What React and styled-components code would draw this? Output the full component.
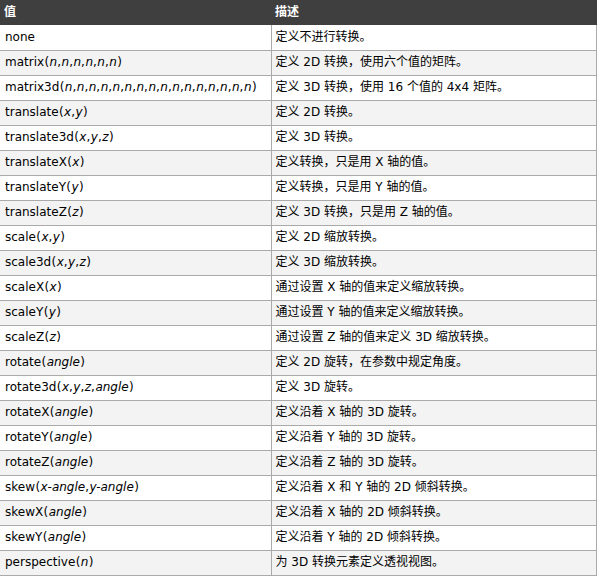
import React from 'react';
import styled, { createGlobalStyle } from 'styled-components';

const GlobalStyle = createGlobalStyle`
  html, body {
    margin: 0;
    padding: 0;
    background: #ffffff;
  }
  body {
    font-family: "DejaVu Sans", Verdana, "Noto Sans CJK SC", sans-serif;
    font-size: 12px;
  }
`;

const rows = [
  ['none', null, '定义不进行转换。'],
  ['matrix', ['n', 'n', 'n', 'n', 'n', 'n'], '定义 2D 转换，使用六个值的矩阵。'],
  ['matrix3d', Array(16).fill('n'), '定义 3D 转换，使用 16 个值的 4x4 矩阵。'],
  ['translate', ['x', 'y'], '定义 2D 转换。'],
  ['translate3d', ['x', 'y', 'z'], '定义 3D 转换。'],
  ['translateX', ['x'], '定义转换，只是用 X 轴的值。'],
  ['translateY', ['y'], '定义转换，只是用 Y 轴的值。'],
  ['translateZ', ['z'], '定义 3D 转换，只是用 Z 轴的值。'],
  ['scale', ['x', 'y'], '定义 2D 缩放转换。'],
  ['scale3d', ['x', 'y', 'z'], '定义 3D 缩放转换。'],
  ['scaleX', ['x'], '通过设置 X 轴的值来定义缩放转换。'],
  ['scaleY', ['y'], '通过设置 Y 轴的值来定义缩放转换。'],
  ['scaleZ', ['z'], '通过设置 Z 轴的值来定义 3D 缩放转换。'],
  ['rotate', ['angle'], '定义 2D 旋转，在参数中规定角度。'],
  ['rotate3d', ['x', 'y', 'z', 'angle'], '定义 3D 旋转。'],
  ['rotateX', ['angle'], '定义沿着 X 轴的 3D 旋转。'],
  ['rotateY', ['angle'], '定义沿着 Y 轴的 3D 旋转。'],
  ['rotateZ', ['angle'], '定义沿着 Z 轴的 3D 旋转。'],
  ['skew', ['x-angle', 'y-angle'], '定义沿着 X 和 Y 轴的 2D 倾斜转换。'],
  ['skewX', ['angle'], '定义沿着 X 轴的 2D 倾斜转换。'],
  ['skewY', ['angle'], '定义沿着 Y 轴的 2D 倾斜转换。'],
  ['perspective', ['n'], '为 3D 转换元素定义透视视图。'],
];

const Value = ({ name, args }) => {
  if (!args) return <>{name}</>;
  return (
    <>
      {name}
      <Paren>(</Paren>
      {args.map((a, i) => (
        <React.Fragment key={i}>
          {i > 0 && <Comma>,</Comma>}
          <Arg>{a}</Arg>
        </React.Fragment>
      ))}
      <Paren>)</Paren>
    </>
  );
};

const App = () => {
  return (
    <>
      <GlobalStyle />
      <Table>
        <colgroup>
          <col style={{ width: 271 }} />
          <col />
        </colgroup>
        <thead>
          <tr>
            <HeadCell>值</HeadCell>
            <HeadCell>描述</HeadCell>
          </tr>
        </thead>
        <tbody>
          {rows.map(([name, args, desc], i) => (
            <Row key={name} striped={i % 2 === 1}>
              <Cell first>
                <Value name={name} args={args} />
              </Cell>
              <Cell>{desc}</Cell>
            </Row>
          ))}
        </tbody>
      </Table>
    </>
  );
};

export default App;

const Table = styled.table`
  width: 597px;
  border-collapse: collapse;
  table-layout: fixed;
  color: #000000;
`;

const HeadCell = styled.th`
  background: #3f3f3f;
  color: #ffffff;
  font-weight: bold;
  text-align: left;
  height: 25px;
  padding: 0 4px;
  border: none;
  box-sizing: border-box;
  line-height: 15px;
`;

const Row = styled.tr.withConfig({ shouldForwardProp: (p) => p !== 'striped' })`
  background: ${(p) => (p.striped ? '#f3f3f3' : '#ffffff')};
`;

const Cell = styled.td.withConfig({ shouldForwardProp: (p) => p !== 'first' })`
  border: 1px solid #aaaaaa;
  border-left: ${(p) => (p.first ? 'none' : '1px solid #aaaaaa')};
  border-top: none;
  height: 25px;
  padding: 0 4px 0 ${(p) => (p.first ? '5px' : '4px')};
  box-sizing: border-box;
  line-height: 15px;
  white-space: nowrap;
  vertical-align: middle;
`;

const Arg = styled.i`
  font-style: italic;
`;

const Comma = styled.span`
  margin-right: 0.5px;
`;

const Paren = styled.span`
  margin: 0 0.4px;
`;
